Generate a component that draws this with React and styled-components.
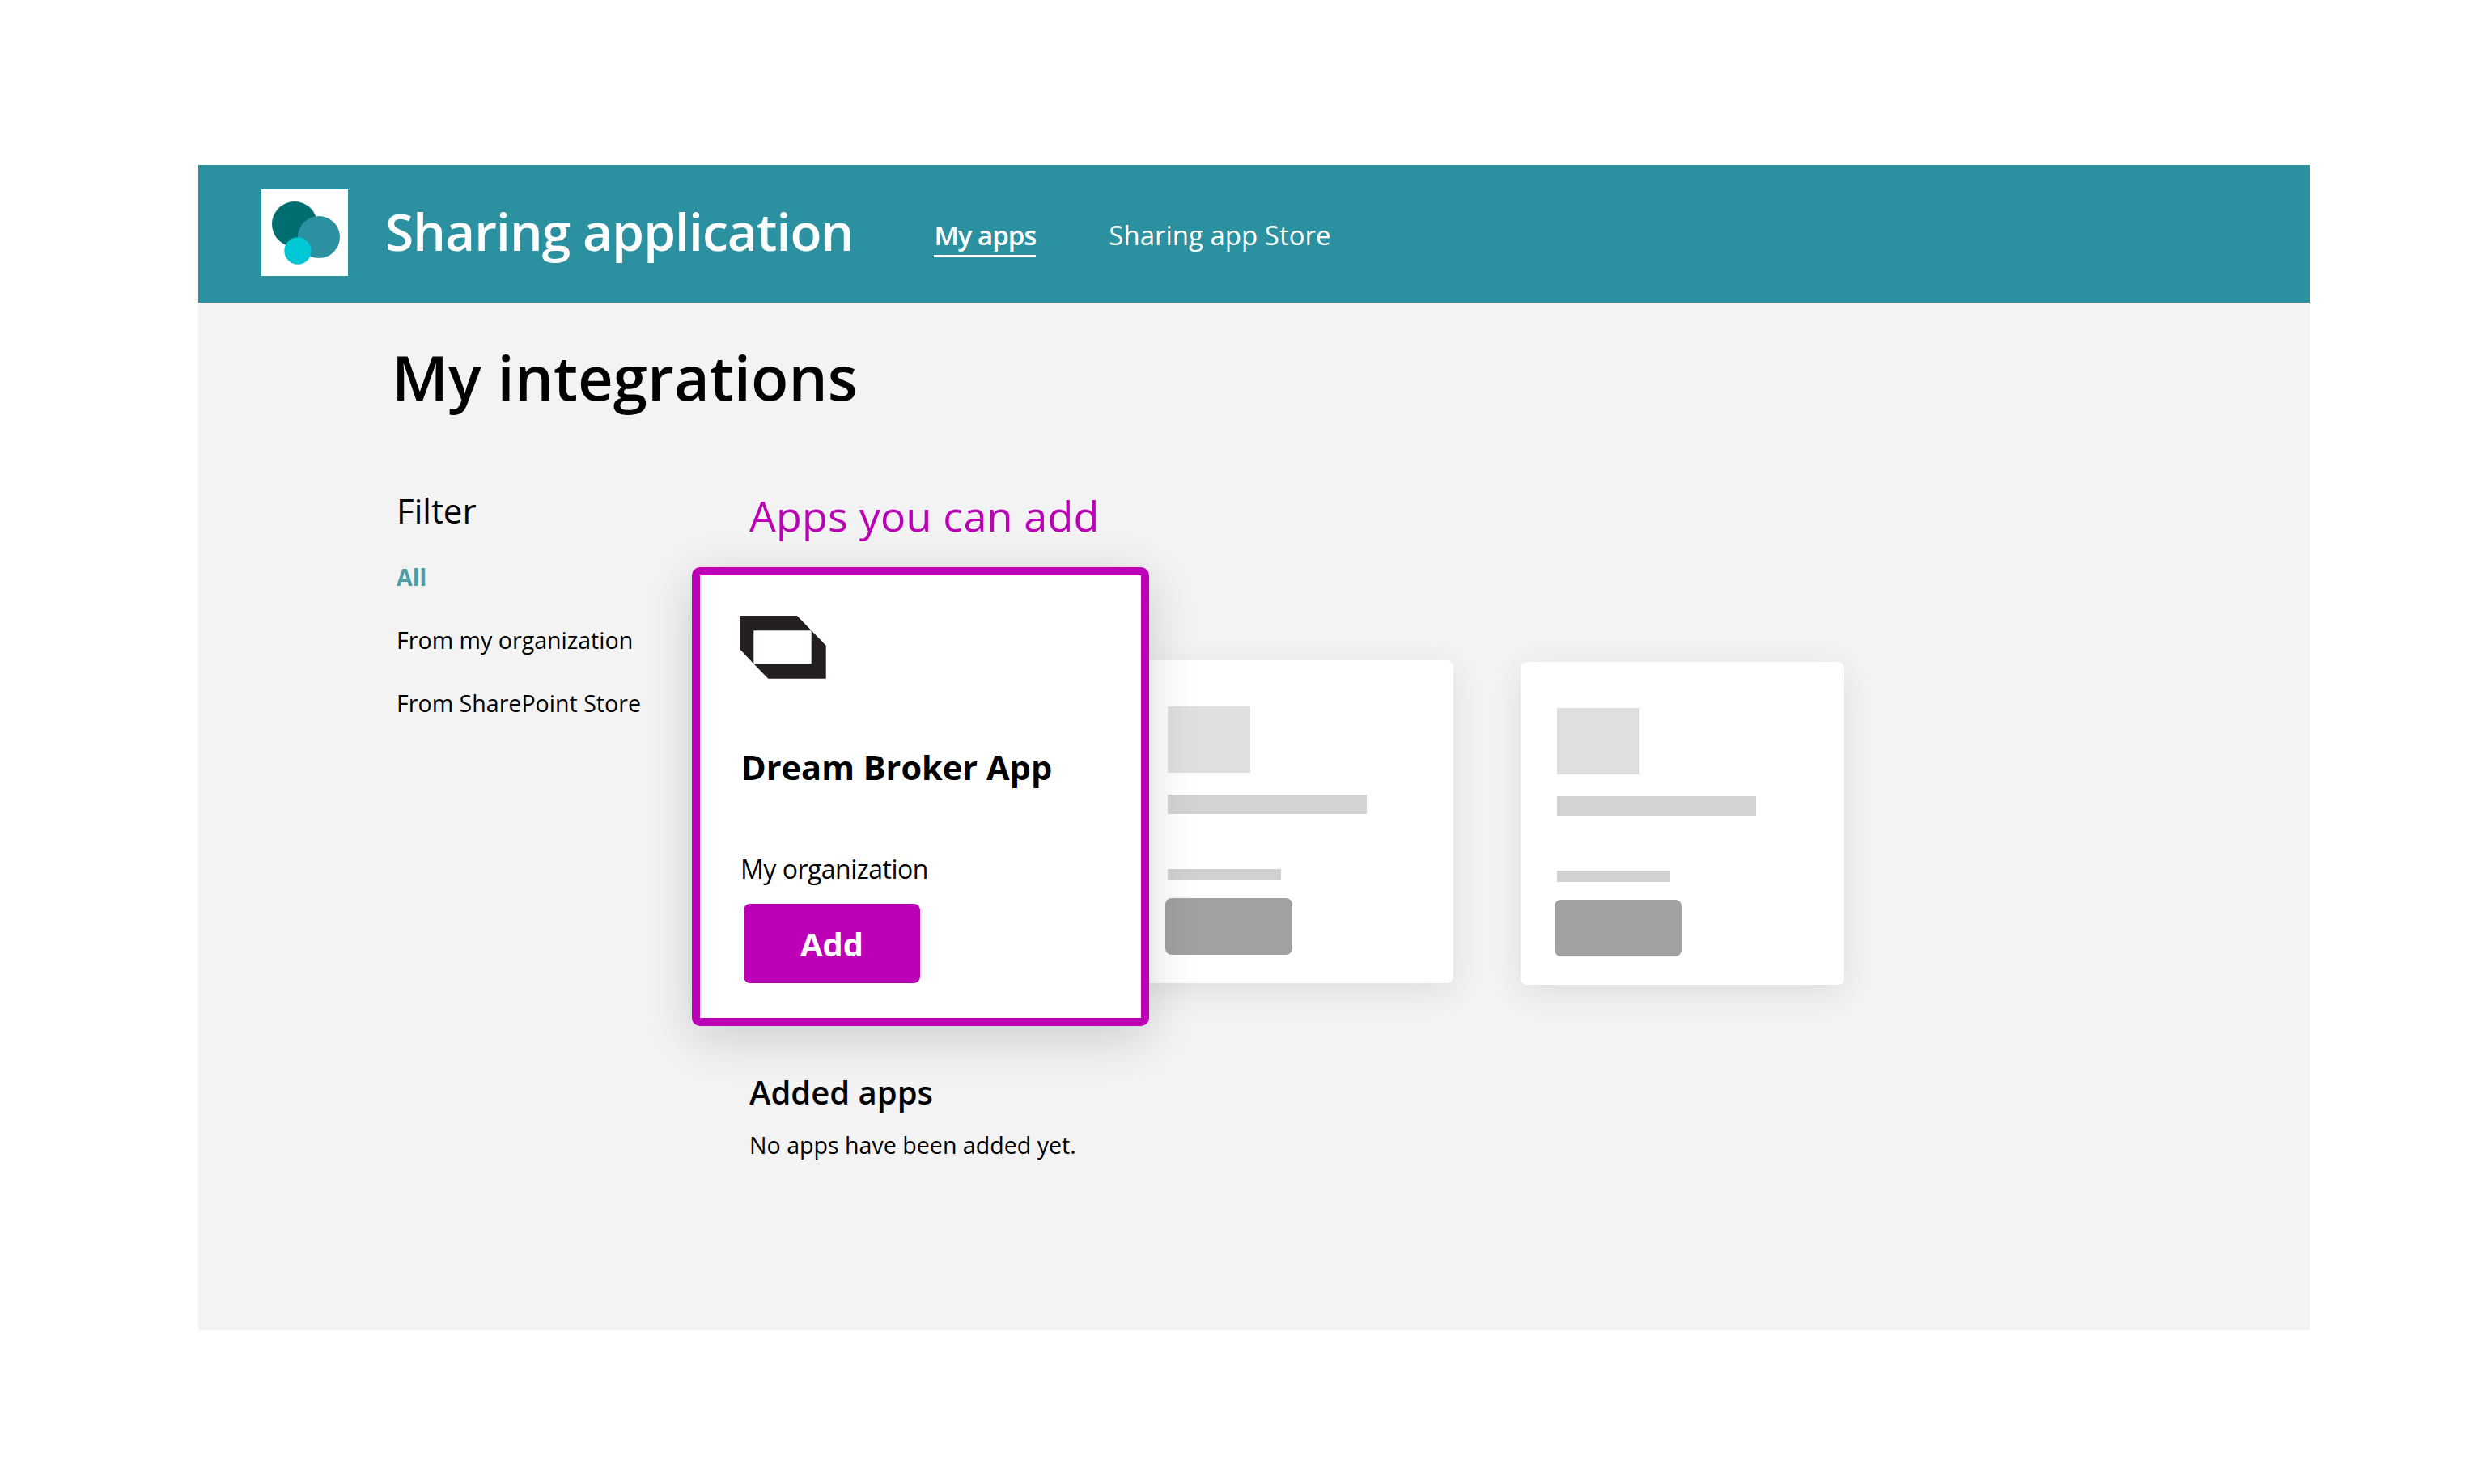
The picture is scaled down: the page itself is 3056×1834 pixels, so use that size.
import React from 'react';
import styled, { createGlobalStyle } from 'styled-components';

const GlobalStyle = createGlobalStyle`
  html, body {
    margin: 0;
    padding: 0;
    background: #ffffff;
  }

  body {
    font-family: "Open Sans", "Noto Sans", sans-serif;
    color: #000000;
  }
`;

const Page = styled.div`
  width: 3056px;
  height: 1834px;
  padding: 204px 202px 190px 245px;
  box-sizing: border-box;
  overflow: hidden;
`;

const Frame = styled.div`
  height: 100%;
  background: #f3f3f3;
  display: flex;
  flex-direction: column;
`;

const Header = styled.header`
  flex-shrink: 0;
  height: 170px;
  padding-left: 78px;
  background: #2b909f;
  display: flex;
  align-items: flex-start;
  color: #ffffff;
`;

const LogoBox = styled.div`
  width: 107px;
  height: 107px;
  margin-top: 30px;
  background: #ffffff;
  svg {
    display: block;
  }
`;

const AppTitle = styled.h1`
  margin: 42px 0 0 46px;
  font-size: 64px;
  line-height: 80px;
  font-weight: 600;
  letter-spacing: -0.9px;
  white-space: nowrap;
`;

const Nav = styled.nav`
  display: flex;
  gap: 90px;
  margin: 56px 0 0 100px;
`;

const NavItem = styled.a`
  font-size: 33px;
  line-height: 55px;
  height: 52px;
  padding-top: 3px;
  font-weight: ${(p) => (p.$active ? 600 : 500)};
  letter-spacing: ${(p) => (p.$active ? '-1px' : '0')};
  border-bottom: ${(p) => (p.$active ? '3px solid #ffffff' : 'none')};
  white-space: nowrap;
`;

const Main = styled.main`
  flex: 1;
  padding-left: 243px;
`;

const PageTitle = styled.h2`
  margin: 46px 0 0 -4px;
  font-size: 76px;
  line-height: 92px;
  font-weight: 600;
  white-space: nowrap;
`;

const Columns = styled.div`
  display: flex;
  margin-top: 91px;
`;

const Sidebar = styled.aside`
  width: 438px;
  flex-shrink: 0;
  padding-left: 2px;
  box-sizing: border-box;
`;

const FilterTitle = styled.div`
  font-size: 42px;
  line-height: 50px;
  font-weight: 500;
  margin-top: 3px;
`;

const FilterList = styled.div`
  display: flex;
  flex-direction: column;
  gap: 40px;
  margin-top: 38px;
`;

const FilterItem = styled.div`
  font-size: 28.6px;
  line-height: 38px;
  font-weight: ${(p) => (p.$active ? 700 : 400)};
  color: ${(p) => (p.$active ? '#4a9fa8' : '#000000')};
  white-space: nowrap;
`;

const Content = styled.section`
  flex: 1;
`;

const AppsHeading = styled.h3`
  margin: 0;
  font-size: 52px;
  line-height: 68px;
  font-weight: 500;
  letter-spacing: 0.2px;
  color: #bb00b5;
  white-space: nowrap;
`;

const CardRow = styled.div`
  display: flex;
  align-items: flex-start;
  margin: 30px 0 0 -71px;
`;

const FeaturedCard = styled.div`
  position: relative;
  z-index: 1;
  flex-shrink: 0;
  width: 565px;
  height: 567px;
  box-sizing: border-box;
  padding: 50px 0 0 49px;
  background: #ffffff;
  border: 10px solid #bb00b5;
  border-radius: 10px;
  box-shadow: 0 14px 60px rgba(0, 0, 0, 0.16);
`;

const CardLogo = styled.svg`
  display: block;
  width: 107px;
  height: 78px;
`;

const CardName = styled.div`
  margin: 79px 0 0 2px;
  font-size: 41.5px;
  line-height: 60px;
  font-weight: 700;
  white-space: nowrap;
`;

const CardOrg = styled.div`
  margin: 74px 0 0 1px;
  font-size: 32px;
  line-height: 44px;
  font-weight: 500;
  letter-spacing: -0.5px;
  white-space: nowrap;
`;

const AddButton = styled.button`
  display: block;
  width: 218px;
  height: 98px;
  margin: 21px 0 0 5px;
  padding: 0;
  border: none;
  border-radius: 8px;
  background: #bb00b5;
  color: #ffffff;
  font-family: inherit;
  font-size: 40px;
  font-weight: 700;
`;

const GhostCard = styled.div`
  flex-shrink: 0;
  width: 400px;
  height: 399px;
  box-sizing: border-box;
  margin-top: ${(p) => p.$top}px;
  margin-left: ${(p) => p.$left}px;
  padding: 57px 0 0 ${(p) => p.$pad}px;
  background: #ffffff;
  border-radius: 8px;
  box-shadow: 0 10px 40px rgba(0, 0, 0, 0.09);
`;

const GhostImage = styled.div`
  width: 102px;
  height: 82px;
  background: #dfdfdf;
`;

const GhostBar = styled.div`
  width: 246px;
  height: 24px;
  margin-top: 27px;
  background: #d3d3d3;
`;

const GhostLine = styled.div`
  width: 140px;
  height: 14px;
  margin-top: 68px;
  background: #d1d1d1;
`;

const GhostButton = styled.div`
  width: 157px;
  height: 70px;
  margin: 22px 0 0 -3px;
  border-radius: 8px;
  background: #a1a1a1;
`;

const AddedTitle = styled.h3`
  margin: 57px 0 0 0;
  font-size: 40px;
  line-height: 50px;
  font-weight: 600;
  white-space: nowrap;
`;

const AddedText = styled.p`
  margin: 21px 0 0 0;
  font-size: 28.6px;
  line-height: 38px;
  white-space: nowrap;
`;

const SharingLogo = () => (
  <svg width="107" height="107" viewBox="0 0 107 107">
    <circle cx="41" cy="43" r="28" fill="#006d70" />
    <circle cx="71" cy="59" r="26" fill="#2b909f" />
    <circle cx="45" cy="76" r="16.7" fill="#00c7d6" />
  </svg>
);

const BrokerLogo = () => (
  <CardLogo viewBox="0 0 107 78">
    <path fill="#231f20" d="M0 0H71L88.7 18.3H17.3V59.3L0 41Z" />
    <path fill="#231f20" d="M88.7 18.3L106.7 36.7V77.7H35.3L17.3 59.3H88.7Z" />
  </CardLogo>
);

const GhostContent = () => (
  <>
    <GhostImage />
    <GhostBar />
    <GhostLine />
    <GhostButton />
  </>
);

const App = () => {
  return (
    <Page>
      <GlobalStyle />
      <Frame>
        <Header>
          <LogoBox>
            <SharingLogo />
          </LogoBox>
          <AppTitle>Sharing application</AppTitle>
          <Nav>
            <NavItem $active>My apps</NavItem>
            <NavItem>Sharing app Store</NavItem>
          </Nav>
        </Header>

        <Main>
          <PageTitle>My integrations</PageTitle>
          <Columns>
            <Sidebar>
              <FilterTitle>Filter</FilterTitle>
              <FilterList>
                <FilterItem $active>All</FilterItem>
                <FilterItem>From my organization</FilterItem>
                <FilterItem>From SharePoint Store</FilterItem>
              </FilterList>
            </Sidebar>

            <Content>
              <AppsHeading>Apps you can add</AppsHeading>
              <CardRow>
                <FeaturedCard>
                  <BrokerLogo />
                  <CardName>Dream Broker App</CardName>
                  <CardOrg>My organization</CardOrg>
                  <AddButton>Add</AddButton>
                </FeaturedCard>
                <GhostCard $top={115} $left={-24} $pad={47}>
                  <GhostContent />
                </GhostCard>
                <GhostCard $top={117} $left={83} $pad={45}>
                  <GhostContent />
                </GhostCard>
              </CardRow>
              <AddedTitle>Added apps</AddedTitle>
              <AddedText>No apps have been added yet.</AddedText>
            </Content>
          </Columns>
        </Main>
      </Frame>
    </Page>
  );
};

export default App;
